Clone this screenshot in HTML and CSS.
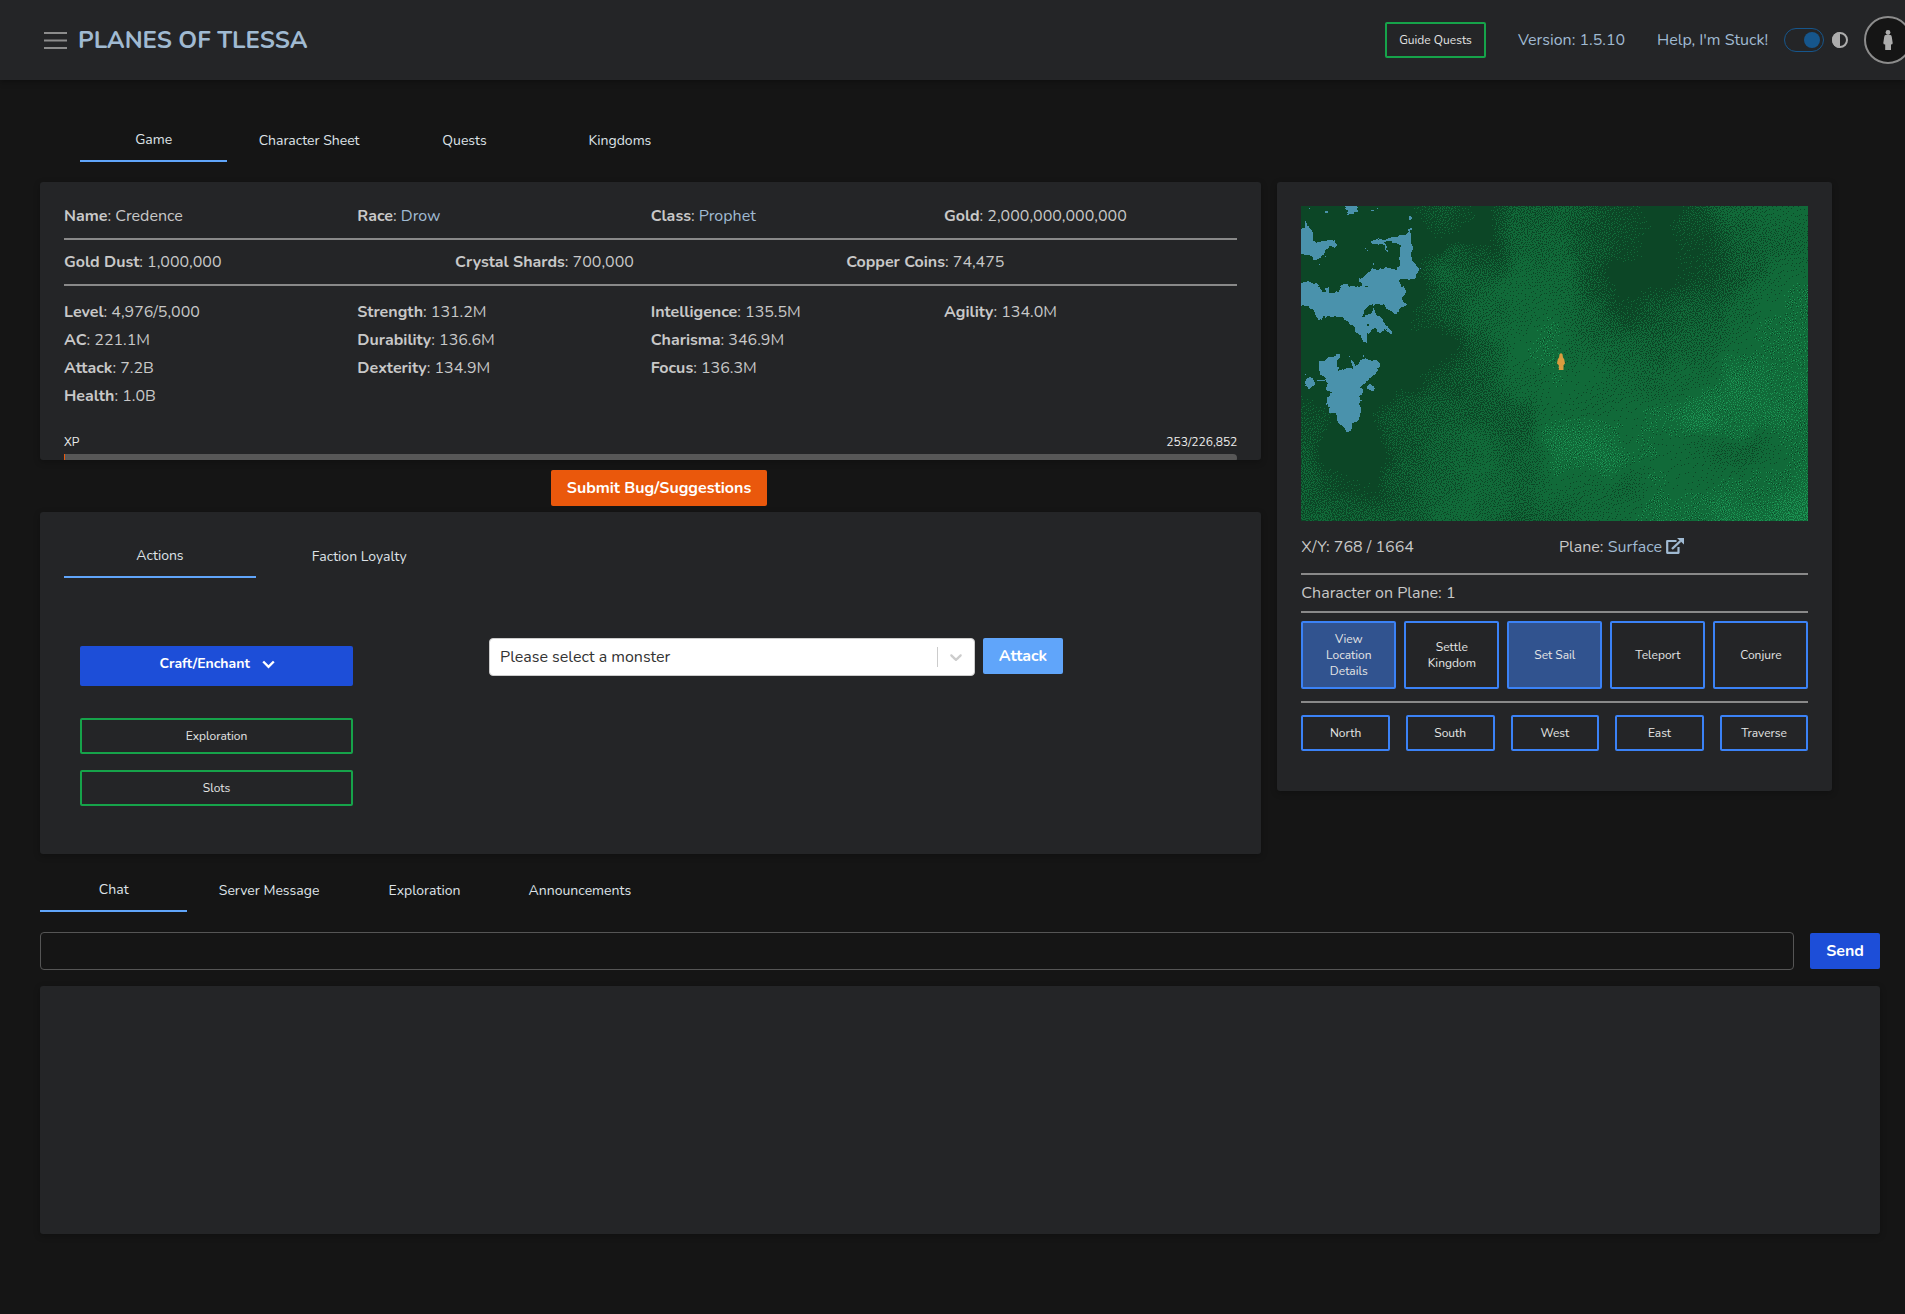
FILE: index.html
```html
<!DOCTYPE html>
<html lang="en">
<head>
<meta charset="utf-8">
<title>Planes of Tlessa</title>
<link rel="stylesheet" href="styles.css">
</head>
<body>
<header class="topbar">
  <svg class="burger" viewBox="0 0 24 18"><path d="M0 2h23M0 9.500h23M0 17h23"/></svg>
  <a class="brand">PLANES OF TLESSA</a>
  <button class="btn outline green guide">Guide Quests</button>
  <a class="link version">Version: 1.5.10</a>
  <a class="link help">Help, I'm Stuck!</a>
  <span class="switch"><i></i></span>
  <svg class="contrast" viewBox="0 0 16 16"><circle cx="8" cy="8" r="7" fill="none" stroke="#adadad" stroke-width="2"/><path d="M8 0a8 8 0 0 0 0 16z" fill="#adadad"/></svg>
  <span class="avatar"><svg viewBox="0 0 10 20"><circle cx="5" cy="2.500" r="2.400"/><path d="M2.500 5h5q1 0 1.300 2l.9 6q0 1.500-1.700 1.500V20H2.200v-5.500Q.3 14.500.3 13l.9-6q.3-2 1.300-2z"/></svg></span>
</header>

<main>
  <nav class="tabs main-tabs"><a class="on">Game</a><a>Character Sheet</a><a>Quests</a><a>Kingdoms</a></nav>

  <div class="columns">
    <div class="left">
      <section class="card sheet">
        <div class="grid4"><p><b>Name</b>: Credence</p><p><b>Race</b>: <a class="link">Drow</a></p><p><b>Class</b>: <a class="link">Prophet</a></p><p><b>Gold</b>: 2,000,000,000,000</p></div>
        <hr>
        <div class="grid3"><p><b>Gold Dust</b>: 1,000,000</p><p><b>Crystal Shards</b>: 700,000</p><p><b>Copper Coins</b>: 74,475</p></div>
        <hr>
        <div class="grid4 stats">
          <div><p><b>Level</b>: 4,976/5,000</p><p><b>AC</b>: 221.1M</p><p><b>Attack</b>: 7.2B</p><p><b>Health</b>: 1.0B</p></div>
          <div><p><b>Strength</b>: 131.2M</p><p><b>Durability</b>: 136.6M</p><p><b>Dexterity</b>: 134.9M</p></div>
          <div><p><b>Intelligence</b>: 135.5M</p><p><b>Charisma</b>: 346.9M</p><p><b>Focus</b>: 136.3M</p></div>
          <div><p><b>Agility</b>: 134.0M</p></div>
        </div>
        <div class="xp"><span>XP</span><span>253/226,852</span></div>
        <div class="bar"><i></i></div>
      </section>

      <button class="btn orange submit">Submit Bug/Suggestions</button>

      <section class="card actions">
        <nav class="tabs action-tabs"><a class="on">Actions</a><a>Faction Loyalty</a></nav>
        <div class="action-body">
          <div class="action-list">
            <button class="btn craft">Craft/Enchant <svg viewBox="0 0 13 9"><path d="M1.200 1.500l5.300 5.300 5.300-5.300"/></svg></button>
            <button class="btn outline green">Exploration</button>
            <button class="btn outline green">Slots</button>
          </div>
          <div class="select"><span>Please select a monster</span><i></i><svg viewBox="0 0 20 20"><path d="M4.516 7.548c.436-.446 1.043-.481 1.576 0L10 11.295l3.908-3.747c.533-.481 1.141-.446 1.574 0 .436.445.408 1.197 0 1.615-.406.418-4.695 4.502-4.695 4.502a1.095 1.095 0 0 1-1.576 0S4.924 9.581 4.516 9.163c-.409-.418-.436-1.170 0-1.615z"/></svg></div>
          <button class="btn attack">Attack</button>
        </div>
      </section>
    </div>

    <section class="card map-card">
      <div class="map">
        <canvas id="terrain" width="507" height="315"></canvas>
        <svg class="water" viewBox="3 18 1521 945" shape-rendering="crispEdges">
          <defs>
            <filter id="coast" x="0" y="0" width="1" height="1" color-interpolation-filters="sRGB">
              <feTurbulence type="fractalNoise" baseFrequency=".05" numOctaves="2" seed="4"/>
              <feDisplacementMap in="SourceGraphic" scale="14" xChannelSelector="R" yChannelSelector="G"/>
            </filter>
          </defs>
          <g filter="url(#coast)">
          <rect x="3" y="18" width="1521" height="945" fill="none"/>
          <path d="M135 10h36v20l6 4-12 3-3 7-15 2-6-10-6-9z"/>
          <path d="M-20 93L12 90 15 64 23 70 28 82 38 88 40 118 48 130 62 128 65 122 85 122 98 120 108 128 111 134 105 141 90 142 82 150 72 150 70 162 62 168 55 178 48 182 38 178 28 170 15 165-20 150z"/>
          <path d="M213 127L220 120 240 118 268 115 290 110 297 104 325 102 327 86 332 86 331 102 334 106 334 130 338 140 336 185 345 190 350 198 357 205 352 213 350 225 340 237 325 239 300 236 297 242 302 255 316 265 316 280 312 290 305 293 305 300 317 310 313 318 300 322 297 335 285 341 275 338 268 328 256 322 254 315 240 311 228 313 224 320 222 330 230 345 245 356 250 370 265 380 278 393 277 403 270 400 258 390 245 395 240 402 233 393 224 384 210 390 200 402 200 428 194 424 183 414 172 402 161 398 162 375 148 370 140 362 125 350 105 347 92 352 70 349 68 357 52 361 45 352 43 333 35 325 24 318-20 316-20 247 12 250 20 246 28 250 38 253 55 252 58 265 70 275 78 274 80 260 85 262 87 276 95 280 112 276 118 260 130 252 140 252 150 258 180 260 188 252 185 247 172 244 178 235 195 228 208 212 215 208 235 210 248 203 265 200 272 205 295 206 298 180 301 145 305 137 285 127 270 123 256 126 255 133 262 142 263 156 257 150 250 138 238 131 218 133z"/>
          <path d="M57 485L70 480 90 474 106 474 108 464 118 462 122 472 112 480 108 484 108 500 117 505 118 512 130 508 140 506 148 508 158 506 160 500 152 492 155 482 163 490 165 500 175 490 178 482 188 478 205 478 218 483 232 482 238 492 240 500 232 505 236 512 228 520 215 530 205 540 188 552 180 565 187 570 200 565 203 557 212 553 222 560 225 568 215 570 195 568 185 572 186 578 178 590 182 600 180 615 185 632 178 645 172 662 160 670 152 690 140 696 132 684 118 670 108 655 105 640 90 640 82 612 80 595 90 580 98 578 78 570 80 560 88 550 76 540 72 530 62 522 57 510z"/>
          <path d="M15 546L20 536 30 530 38 536 46 548 40 558 26 566 20 558z"/>
          <path class="land" d="M183 351L190 342 192 332 200 322 213 315 222 312 222 318 217 326 216 335 205 342 195 347z"/>
          </g>
          <path d="M75 32h8v8h-6zM213 29h9v3h-9zM231 23h3v3h-3zM27 23h3v3h-3zM327 48h6l3 6-5 8-5-6zM50 541h24v3h-24zM219 188h3v6h-3zM196 144h3v3h-3zM201 150h3v3h-3zM57 192h3v3h-3zM14 521h3v3h-3zM75 168h3v3h-3zM190 466h3v5h-3zM148 468h3v3h-3zM361 204h3v3h-3z"/>
          <path class="land" d="M200 373h6v6h-6zM195 259h9v3h-9z"/>
        </svg>
        <svg class="pin" viewBox="0 0 8 17"><path d="M2.500 1.200Q4-.6 5.500 1.200L6 4.500l1.200 1.800.8 4.200-1.500 1.700V17H1.800v-4.800L0 10.500l.8-4.200L2 4.500z"/></svg>
      </div>
      <div class="place"><p>X/Y: 768 / 1664</p><p>Plane: <a class="link">Surface <svg viewBox="0 0 19 16"><path d="M11.500 3H2.200v11.800h11.300V9" fill="none" stroke="currentColor" stroke-width="2.200" stroke-linejoin="round"/><path d="M7 11L15.500 3" stroke="currentColor" stroke-width="2.400"/><path d="M12 0h7v6.500z" fill="currentColor"/></svg></a></p></div>
      <hr>
      <p class="online">Character on Plane: 1</p>
      <hr>
      <div class="places">
        <button class="btn outline blue filled">View Location Details</button><button class="btn outline blue">Settle Kingdom</button><button class="btn outline blue filled">Set Sail</button><button class="btn outline blue">Teleport</button><button class="btn outline blue">Conjure</button>
      </div>
      <hr>
      <div class="moves">
        <button class="btn outline blue">North</button><button class="btn outline blue">South</button><button class="btn outline blue">West</button><button class="btn outline blue">East</button><button class="btn outline blue">Traverse</button>
      </div>
    </section>
  </div>

  <nav class="tabs chat-tabs"><a class="on">Chat</a><a>Server Message</a><a>Exploration</a><a>Announcements</a></nav>
  <div class="composer"><input type="text" aria-label="Message"><button class="btn send">Send</button></div>
  <section class="card log"></section>
</main>
<script src="map.js"></script>
</body>
</html>
```
FILE: styles.css
```css
* { box-sizing: border-box; }
body {
  margin: 0;
  height: 1314px;
  overflow: hidden;
  background: #151515;
  color: #c8c8c8;
  font: 16px/24px Nunito, Lato, sans-serif;
}
p { margin: 0; white-space: nowrap; }
b { font-weight: 700; }
hr { margin: 0; border: 0; height: 2px; background: #898989; }
.link { color: #a0bad2; }

.topbar {
  display: flex;
  align-items: center;
  height: 80px;
  padding-left: 44px;
  background: #242527;
  box-shadow: 0 2px 6px rgba(0, 0, 0, .3);
}
.topbar > * { flex: none; white-space: nowrap; }
.burger { width: 24px; height: 18px; }
.burger path { stroke: #8c8c8c; stroke-width: 2; }
.brand { width: 1307px; margin-left: 10px; color: #a0bad2; font-size: 24px; font-weight: 700; }
.guide { width: 101px; }
.version { width: 107px; margin-left: 32px; }
.help { width: 111px; margin-left: 32px; }
.switch { display: flex; justify-content: flex-end; width: 40px; height: 24px; padding: 3px; margin-left: 16px; border: 1px solid #16568c; border-radius: 12px; }
.switch i { width: 16px; height: 16px; border-radius: 50%; background: #16568c; }
.contrast { width: 16px; height: 16px; margin-left: 8px; }
.avatar { display: flex; align-items: center; justify-content: center; width: 48px; height: 48px; margin-left: 16px; border: 2px solid #8c8c8c; border-radius: 50%; background: #151515; }
.avatar svg { width: 10px; height: 20px; fill: #adadad; }

.btn {
  height: 36px;
  padding: 0;
  border: 0;
  border-radius: 2px;
  color: #fff;
  font: 700 16px/24px Nunito, Lato, sans-serif;
}
.btn.outline { border: 2px solid; background: transparent; color: #e5e5e5; font-size: 12px; font-weight: 400; line-height: 16px; }
.btn.green { border-color: #16a34a; }
.btn.blue { border-color: #3b82f6; }
.btn.filled { background: #31538f; }

main { padding: 0 25px 0 40px; }
.tabs { display: flex; gap: 8px; }
.tabs a { display: flex; align-items: center; justify-content: center; width: 147.4px; height: 44px; padding-top: 1px; color: #dfe3e8; font-size: 14px; line-height: 20px; }
.tabs .on { border-bottom: 2px solid #60a5fa; }
.main-tabs { padding: 38px 0 0 40px; }

.card { background: #242527; border-radius: 3px; box-shadow: 0 2px 6px rgba(0, 0, 0, .25); }
.columns { display: flex; align-items: flex-start; gap: 16px; margin-top: 20px; }
.left { width: 1221.3px; }
.sheet { height: 278px; padding: 22px 24px 0; overflow: hidden; }
.grid4 { display: grid; grid-template-columns: repeat(4, 1fr); }
.grid3 { display: grid; grid-template-columns: repeat(3, 1fr); padding: 10px 0; }
.sheet .grid4:first-child { padding-bottom: 10px; }
.stats { padding-top: 14px; }
.stats > div { display: grid; grid-auto-rows: 24px; gap: 4px; align-content: start; }
.xp { display: flex; justify-content: space-between; margin-top: 26px; font-size: 12px; line-height: 16px; color: #ececec; }
.bar { height: 8px; margin-top: 4px; border-radius: 0 4px 4px 0; background: #575757; }
.bar i { display: block; width: 1.3px; height: 8px; background: #ea580c; }
.orange { background: #ea580c; }
.submit { display: block; width: 216px; margin: 10px 0 6px 511px; }

.actions { height: 342px; padding: 22px 24px; }
.action-tabs a { width: 191.9px; }
.action-tabs { gap: 7.4px; }
.action-body { display: flex; padding: 60px 16px 0; }
.action-list { display: grid; width: 273px; gap: 16px; padding-top: 8px; }
.craft { height: 40px; margin-bottom: 16px; padding: 0 0 4px 1px; background: #1d4ed8; font-size: 14px; }
.craft svg { width: 13px; height: 9px; margin-left: 8px; vertical-align: -1px; fill: none; stroke: #fff; stroke-width: 2.4; }
.select { display: flex; align-items: center; width: 486px; height: 38px; margin-left: 136px; padding: 0 8px 0 10px; border: 1px solid #ccc; border-radius: 4px; background: #fff; color: #333; }
.select span { flex: 1; }
.select i { width: 1px; height: 20px; background: #ccc; }
.select svg { width: 20px; height: 20px; margin-left: 8px; fill: #ccc; }
.attack { width: 80px; margin-left: 8px; background: #60a5fa; }

.map-card { width: 555.15px; height: 609px; padding: 24px; }
.map { position: relative; height: 315px; }
.map canvas { display: block; }
.water { position: absolute; inset: 0; width: 507px; height: 315px; fill: #4a92ac; }
.water .land { fill: #0c4626; }
.pin { position: absolute; left: 256px; top: 147px; width: 8px; height: 17px; fill: #d99c3f; }
.place { display: grid; grid-template-columns: 257.6px 1fr; padding: 14px 0; }
.place svg { width: 19px; height: 16px; margin-left: -1.5px; vertical-align: -2px; }
.online { padding: 6px 0; }
.places { display: grid; grid-template-columns: repeat(5, 1fr); gap: 8px; padding: 8px 0 12px; }
.places .btn { height: 68px; padding: 0 10px; }
.moves { display: grid; grid-template-columns: repeat(5, 1fr); gap: 16px; padding-top: 12px; }

.chat-tabs { margin-top: 14px; }
.composer { display: flex; align-items: center; gap: 16px; margin-top: 20px; }
.composer input { width: 1754px; height: 38px; border: 1px solid #555; border-radius: 4px; background: transparent; color: #c8c8c8; }
.send { width: 70px; background: #1d4ed8; }
.log { width: 1840px; height: 248px; margin-top: 16px; }
```
FILE: map.js
```js
// Terrain height samples: 0 = deep forest, 1 = grassland, 2 = bright meadow.
const heights = [
  [0, 0, 0, 0, .3, 0, .5, .6, .35, .1, 0, .3, .75, .95, .97],
  [0, 0, 0, 0, 0, 0, .65, .7, .4, .1, 0, .1, .55, .75, .85],
  [0, 0, 0, 0, .65, .5, .93, .85, .3, 0, 0, .1, .45, .9, .97],
  [0, 0, 0, 0, .45, .8, .93, 1.0, .6, .15, .35, .55, .85, 1, 1.05],
  [0, 0, 0, 0, 0, .45, 1, 1.05, .8, .75, .55, .7, 1, 1, 1.1],
  [0, 0, 0, 0, .2, .4, .87, 1, .97, .92, .85, .92, 1.3, 1.1, 1.12],
  [.15, 0, 0, .4, .5, .5, .45, .95, .95, .97, 1.05, 1.4, 1.15, 1.2, 1.08],
  [.4, 0, 0, .4, .6, .87, .55, 1.2, 1.25, 1, .98, .94, .75, .96, 1.03],
  [.5, .1, .05, .4, .7, .85, .7, .98, .94, .85, 1.01, .98, 1.05, 1, 1.3],
  [.5, .5, .45, .5, .8, .85, .5, .6, .9, .95, 1.07, 1.07, 1.3, 1.4, 1.5]
];
const shades = [[12, 70, 38], [17, 106, 57], [27, 146, 82]];

const canvas = document.getElementById('terrain');
const ctx = canvas.getContext('2d');
const image = ctx.createImageData(canvas.width, canvas.height);

let seed = 1234567;
function random() {
  seed = (seed * 1664525 + 1013904223) >>> 0;
  return seed / 4294967296;
}

function sampler(rows) {
  const maxY = rows.length - 1;
  const maxX = rows[0].length - 1;
  return (u, v) => {
    const gx = u * maxX, gy = v * maxY;
    const x = Math.min(maxX - 1, Math.floor(gx)), y = Math.min(maxY - 1, Math.floor(gy));
    let fx = gx - x, fy = gy - y;
    fx = fx * fx * (3 - 2 * fx);
    fy = fy * fy * (3 - 2 * fy);
    return (rows[y][x] * (1 - fx) + rows[y][x + 1] * fx) * (1 - fy) +
      (rows[y + 1][x] * (1 - fx) + rows[y + 1][x + 1] * fx) * fy;
  };
}
const noise = (w, h) => sampler(Array.from({ length: h }, () => Array.from({ length: w }, () => random() - .5)));

const base = sampler(heights);
const warpX = noise(24, 16), warpY = noise(24, 16), fine = noise(46, 30), coarse = noise(20, 13);
const clamp = n => Math.max(0, Math.min(1, n));

// Levels are dithered by diffusing the rounding error to the neighbouring pixels.
let row = new Float32Array(canvas.width + 2);
for (let y = 0; y < canvas.height; y++) {
  const next = new Float32Array(canvas.width + 2);
  for (let x = 0; x < canvas.width; x++) {
    const u = x / canvas.width, v = y / canvas.height;
    const raw = base(clamp(u + warpX(u, v) * .05), clamp(v + warpY(u, v) * .07));
    const rough = Math.min(1, raw * 3) * (raw > .9 ? .3 : 1);
    const mixed = raw + (fine(u, v) * .14 + coarse(u, v) * .12) * rough;
    const level = mixed > 1 ? 1 + (mixed - 1) * .9 : Math.pow(Math.max(0, mixed - .05) / .95, .85);
    const wanted = level + row[x + 1];
    const flat = level < .01;
    const pick = flat ? 0 : Math.max(0, Math.min(level > 1 ? 2 : 1, Math.round(wanted + (random() - .5) * 1.1)));
    const error = flat ? 0 : Math.max(-.6, Math.min(.6, wanted - pick));
    row[x + 2] += error * 7 / 16;
    next[x] += error * 3 / 16;
    next[x + 1] += error * 5 / 16;
    next[x + 2] += error / 16;
    const i = (y * canvas.width + x) * 4;
    image.data[i] = shades[pick][0];
    image.data[i + 1] = shades[pick][1];
    image.data[i + 2] = shades[pick][2];
    image.data[i + 3] = 255;
  }
  row = next;
}
ctx.putImageData(image, 0, 0);
```
